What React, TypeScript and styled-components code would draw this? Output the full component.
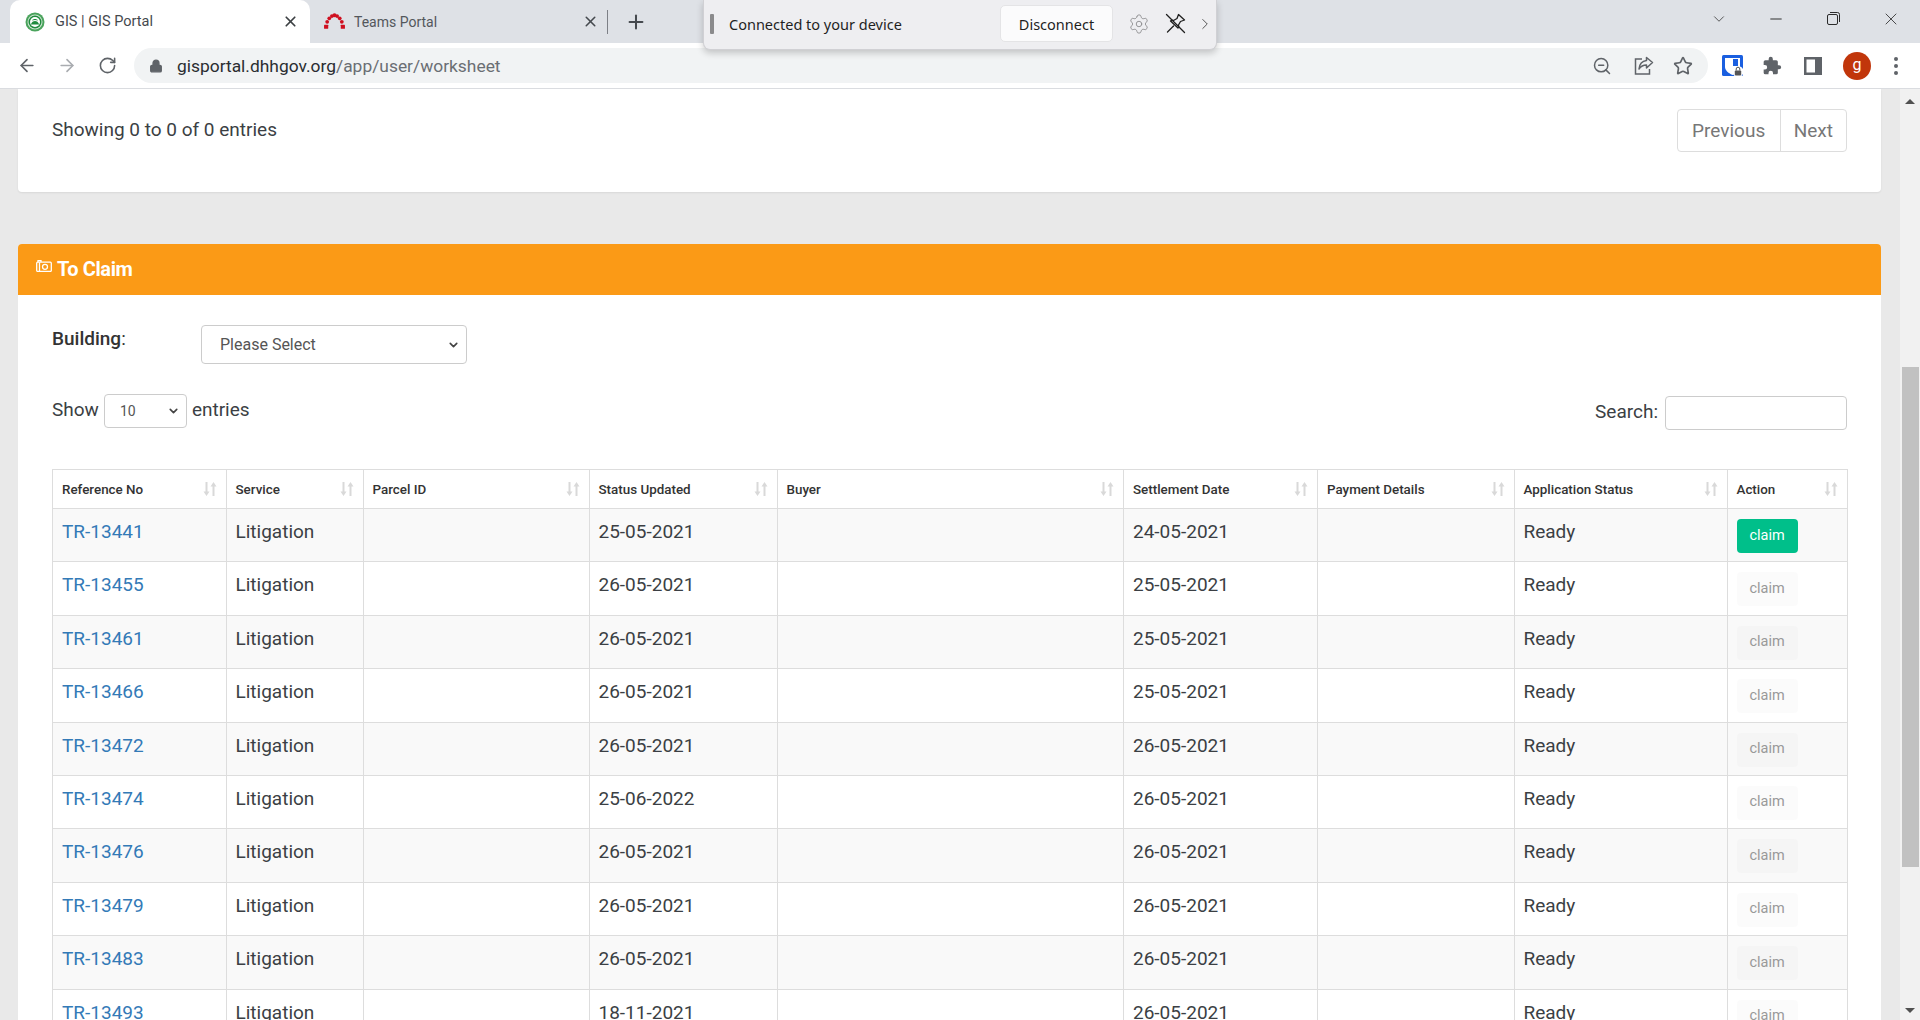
import React from "react";
import styled, { createGlobalStyle } from "styled-components";
import { ArrowLeft, ArrowRight, RotateCw, Lock, ZoomOut, Star, X, Plus, Minus, ChevronDown, ChevronRight, Settings } from "lucide-react";

const Global = createGlobalStyle`
  html, body { margin: 0; padding: 0; height: 100%; overflow: hidden; background: #e9e9e9; }
  * { box-sizing: border-box; }
  body { font-family: Roboto, "Liberation Sans", sans-serif; color: #333; }
`;

const Shell = styled.div`
  position: relative;
  width: 1920px;
  height: 1020px;
  display: flex;
  flex-direction: column;
  overflow: hidden;
`;

/* ---------- browser chrome ---------- */
const TabStrip = styled.div`
  height: 43px;
  flex: none;
  background: #dee1e6;
  display: flex;
  align-items: stretch;
  padding-left: 10px;
`;
const Tab = styled.div<{ $active?: boolean }>`
  width: 300px;
  display: flex;
  align-items: center;
  padding: 0 11px 0 ${(p) => (p.$active ? 15 : 13)}px;
  background: ${(p) => (p.$active ? "#fff" : "transparent")};
  border-radius: 10px 10px 0 0;
  color: ${(p) => (p.$active ? "#45494e" : "#53575c")};
  font-size: ${(p) => (p.$active ? 14.5 : 14)}px;
`;
const TabTitle = styled.span<{ $gap: number }>`
  flex: 1;
  margin-left: ${(p) => p.$gap}px;
  white-space: nowrap;
`;
const TabDivider = styled.div`
  width: 1px;
  height: 24px;
  margin: 10px 0 0 -3px;
  background: #7d8086;
`;
const NewTab = styled.div`
  width: 24px;
  margin-left: 17px;
  display: flex;
  align-items: center;
  color: #45494e;
`;
const WindowControls = styled.div`
  margin-left: auto;
  display: flex;
  align-items: center;
  color: #2b2b2b;
  margin-top: -6px;
`;
const WindowButton = styled.div`
  width: 57.5px;
  display: flex;
  justify-content: center;
`;
const Toolbar = styled.div`
  height: 46px;
  flex: none;
  background: #fff;
  border-bottom: 1px solid #dadce0;
  display: flex;
  align-items: flex-start;
  padding: 5px 0 0 17px;
`;
const NavButton = styled.div<{ $dim?: boolean }>`
  width: 20px;
  height: 35px;
  margin-right: 20px;
  display: flex;
  align-items: center;
  justify-content: center;
  color: ${(p) => (p.$dim ? "#a9acb0" : "#5f6368")};
`;
const Omnibox = styled.div`
  width: 1574px;
  height: 35px;
  margin-left: -3px;
  border-radius: 18px;
  background: #f1f3f4;
  display: flex;
  align-items: center;
  padding: 0 15px;
  color: #5f6368;
`;
const Url = styled.div`
  margin-left: 14px;
  font-size: 17.4px;
  color: #6a6e73;
  white-space: nowrap;
`;
const Host = styled.span`
  color: #2a2d31;
`;
const OmniIcons = styled.div`
  margin-left: auto;
  display: flex;
  align-items: center;
  gap: 19px;
`;
const ZoomIcon = styled(ZoomOut)`
  margin-right: 3px;
`;
const ExtensionIcons = styled.div`
  display: flex;
  align-items: center;
  height: 35px;
  margin-left: 14px;
  gap: 18px;
  color: #5f6368;
`;
const PanelWrap = styled.div`
  display: flex;
  margin: 0 4px;
`;
const Avatar = styled.div`
  width: 28px;
  height: 28px;
  border-radius: 50%;
  background: #c1360b;
  color: #fff;
  font-size: 16px;
  display: flex;
  align-items: center;
  justify-content: center;
  margin: 0 0 0 -1px;
  padding-bottom: 3px;
`;
const Kebab = styled.div`
  display: flex;
  flex-direction: column;
  gap: 3px;
  margin-left: 5px;
`;
const KebabDot = styled.span`
  width: 4px;
  height: 4px;
  border-radius: 50%;
  background: #5f6368;
`;

/* ---------- connection bar overlay ---------- */
const ConnectBar = styled.div`
  position: absolute;
  left: 703px;
  top: 0;
  width: 514px;
  height: 50px;
  background: #eeeef1;
  border: 1px solid #d0d0d4;
  border-top: none;
  border-radius: 0 0 7px 7px;
  box-shadow: 0 3px 7px rgba(0, 0, 0, 0.2);
  display: flex;
  align-items: center;
  padding: 0 0 2px 6px;
  font-family: "Noto Sans", "Open Sans", sans-serif;
  font-size: 14.5px;
  color: #1f1f1f;
`;
const Grip = styled.div`
  width: 4px;
  height: 20px;
  background: #8a8a8c;
  border-radius: 1px;
`;
const ConnectText = styled.span`
  margin-left: 15px;
  width: 271px;
  white-space: nowrap;
`;
const DisconnectButton = styled.div`
  width: 113px;
  height: 37px;
  background: #fbfbfc;
  border: 1px solid #e4e4e6;
  border-radius: 5px;
  display: flex;
  align-items: center;
  justify-content: center;
`;
const ConnectIcons = styled.div`
  display: flex;
  align-items: center;
  margin-left: 15px;
  gap: 15px;
  color: #8e8e90;
`;
const MoreIcon = styled.span`
  display: flex;
  color: #444;
  margin-left: -5px;
`;

/* ---------- page ---------- */
const Viewport = styled.div`
  flex: 1;
  min-height: 0;
  display: flex;
  background: #e9e9e9;
`;
const Content = styled.div`
  width: 1900px;
  padding: 0 19px 0 18px;
  overflow: hidden;
`;
const Scrollbar = styled.div`
  width: 20px;
  display: flex;
  flex-direction: column;
  align-items: center;
  background: #f1f1f1;
`;
const ScrollArrow = styled.div<{ $down?: boolean }>`
  width: 0;
  height: 0;
  margin-top: ${(p) => (p.$down ? 141 : 10)}px;
  border-left: 5px solid transparent;
  border-right: 5px solid transparent;
  ${(p) => (p.$down ? "border-top: 5px solid #505050;" : "border-bottom: 5px solid #505050;")}
`;
const ScrollThumb = styled.div`
  width: 17px;
  height: 500px;
  margin-top: 263px;
  background: #c1c1c1;
`;
const TopCard = styled.div`
  height: 103px;
  background: #fff;
  border-radius: 0 0 4px 4px;
  box-shadow: 0 1px 2px rgba(0, 0, 0, 0.08);
  display: flex;
  justify-content: space-between;
  padding: 20px 34px 0;
`;
const InfoText = styled.div`
  font-size: 19px;
  line-height: 41px;
  color: #3b3f44;
`;
const Pager = styled.div`
  display: flex;
  height: 43px;
  border: 1px solid #ddd;
  border-radius: 4px;
  color: #777;
  font-size: 19px;
`;
const PageButton = styled.div<{ $last?: boolean }>`
  padding: 0 ${(p) => (p.$last ? 13 : 14.5)}px;
  display: flex;
  align-items: center;
  ${(p) => (p.$last ? "border-left: 1px solid #ddd;" : "")}
`;
const ClaimCard = styled.div`
  margin-top: 52px;
  background: #fff;
  border-radius: 4px 4px 0 0;
`;
const CardHeader = styled.div`
  height: 51px;
  background: #fb9a16;
  border-radius: 4px 4px 0 0;
  display: flex;
  align-items: center;
  padding: 0 0 2px 18px;
  color: #fff;
`;
const CardTitle = styled.h3`
  margin: 0 0 0 5px;
  font-size: 20px;
  font-weight: 700;
  letter-spacing: -0.4px;
`;
const CameraMark = styled.svg`
  margin-top: -5px;
`;
const CardBody = styled.div`
  padding: 30px 34px 0;
`;
const BuildingRow = styled.div`
  display: flex;
  height: 39px;
`;
const FieldLabel = styled.label`
  width: 149px;
  font-size: 19px;
  line-height: 28px;
  color: #333;
`;
const Strong = styled.b`
  font-weight: 500;
`;
const SelectWrap = styled.div`
  position: relative;
  display: flex;
`;
const SelectChevron = styled.span<{ $right: number }>`
  position: absolute;
  right: ${(p) => p.$right}px;
  top: 50%;
  transform: translateY(-50%);
  display: flex;
  color: #444;
  pointer-events: none;
`;
const BuildingSelect = styled.select`
  appearance: none;
  width: 266px;
  height: 39px;
  padding: 0 0 0 18px;
  border: 1px solid #ccc;
  border-radius: 4px;
  background: #fff;
  color: #555;
  font: 400 16px Roboto, sans-serif;
`;
const FilterRow = styled.div`
  display: flex;
  justify-content: space-between;
  margin-top: 30px;
  height: 75px;
`;
const Lengths = styled.div`
  display: flex;
  height: 34px;
  align-items: center;
  font-size: 19px;
  color: #3b3f44;
  gap: 5px;
`;
const LengthText = styled.span`
  padding-bottom: 4px;
`;
const LengthSelect = styled.select`
  appearance: none;
  width: 83px;
  height: 34px;
  padding: 0 0 0 15px;
  border: 1px solid #ccc;
  border-radius: 4px;
  background: #fff;
  color: #555;
  font: 400 14px Roboto, sans-serif;
`;
const SearchBox = styled.div`
  display: flex;
  align-items: flex-start;
  margin-top: 2px;
  font-size: 19px;
  color: #3b3f44;
  gap: 7px;
`;
const SearchLabel = styled.span`
  line-height: 32px;
`;
const SearchInput = styled.input`
  width: 182px;
  height: 34px;
  border: 1px solid #ccc;
  border-radius: 4px;
  background: #fff;
`;
const Table = styled.table`
  width: 1795px;
  table-layout: fixed;
  border-collapse: collapse;
`;
const HeadCell = styled.th<{ $w: number }>`
  width: ${(p) => p.$w}px;
  height: 39px;
  padding: 0 9px;
  border: 1px solid #ddd;
  text-align: left;
  font-size: 13.4px;
  font-weight: 500;
  color: #333;
`;
const HeadInner = styled.div`
  display: flex;
  align-items: center;
  justify-content: space-between;
  white-space: nowrap;
`;
const Row = styled.tr<{ $odd: boolean }>`
  height: 53.4px;
  background: ${(p) => (p.$odd ? "#f9f9f9" : "#fff")};
`;
const Cell = styled.td`
  padding: 9px 9px 0;
  vertical-align: top;
  border: 1px solid #ddd;
  font-size: 19px;
  line-height: 27px;
  color: #3b3f44;
  height: 53.4px;
`;
const RefLink = styled.a`
  color: #337ab7;
  text-decoration: none;
`;
const ClaimButton = styled.div<{ $enabled: boolean }>`
  width: 61px;
  height: 34px;
  margin-top: 1px;
  padding-bottom: 2px;
  display: flex;
  align-items: center;
  justify-content: center;
  border-radius: 4px;
  font-size: 14.5px;
  background: ${(p) => (p.$enabled ? "#00bf8a" : "rgba(0,0,0,0.015)")};
  color: ${(p) => (p.$enabled ? "#fff" : "#999")};
`;

/* ---------- drawn icons ---------- */
const GisIcon = () => (
  <svg width="20" height="20" viewBox="0 0 20 20">
    <circle cx="10" cy="10" r="9.500" fill="#4aa35c" />
    <circle cx="10" cy="10" r="7.500" fill="#cfe6d3" />
    <circle cx="10" cy="10" r="6.500" fill="#1f8a3d" />
    <circle cx="10" cy="10" r="5" fill="#fff" />
    <path d="M5.800 12.500c.8-2.500 2.500-3.500 4.200-3.500s3.400 1 4.200 3.500z" fill="#1f8a3d" />
    <path d="M7 8.500c1-2 5-2 6 0-2-.8-4-.8-6 0z" fill="#1f8a3d" />
  </svg>
);
const TeamsIcon = () => (
  <svg width="23" height="17" viewBox="0 0 22 16" fill="#cf1020">
    <rect x="1" y="11" width="4" height="4" rx=".5" />
    <rect x="17" y="11" width="4" height="4" rx=".5" />
    <circle cx="4" cy="8.300" r="1.800" />
    <circle cx="18" cy="8.300" r="1.800" />
    <circle cx="6" cy="5" r="1.800" />
    <circle cx="16" cy="5" r="1.800" />
    <circle cx="8.500" cy="2.800" r="1.800" />
    <circle cx="13.500" cy="2.800" r="1.800" />
    <circle cx="11" cy="2" r="2" />
  </svg>
);
const SortIcon = () => (
  <svg width="14" height="14" viewBox="0 0 14 14" fill="#d9d9d9">
    <path d="M2.500 0h2v9.500h2L3.500 14 .5 9.500h2z" />
    <path d="M9.500 14h2V4.500h2L10.500 0l-3 4.500h2z" />
  </svg>
);
const ShareIcon = () => (
  <svg width="20" height="20" viewBox="0 0 20 20" fill="none" stroke="#5f6368" strokeWidth="1.500">
    <path d="M8 3H1.500v15h14v-5" />
    <path d="M18.500 6.500 12.500 1.500v3C8 5 5.500 8 5 13c2-3 4-4 7.500-4v3z" strokeLinejoin="round" />
  </svg>
);
const ShieldExt = () => (
  <svg width="22" height="22" viewBox="0 0 22 22">
    <rect width="21" height="21" rx="1.500" fill="#1a5fe0" />
    <path d="M3 3h15v9c0 3-3 6-7.500 8C6 18 3 15 3 12z" fill="#fff" />
    <path d="M11 4h5v7h-5z" fill="#1a5fe0" />
    <circle cx="16" cy="16.500" r="5.500" fill="#fff" />
    <rect x="12.800" y="15.500" width="6.400" height="5" rx="1" fill="#555" />
    <path d="M14.200 15.500v-1.500a1.800 1.800 0 0 1 3.600 0v1.500" fill="none" stroke="#555" strokeWidth="1" />
  </svg>
);
const PuzzleIcon = () => (
  <svg width="20" height="20" viewBox="0 0 24 24" fill="#5f6368">
    <path d="M20.500 11H19V7a2 2 0 0 0-2-2h-4V3.500a2.500 2.500 0 0 0-5 0V5H4a2 2 0 0 0-2 2v3.800h1.500a2.700 2.700 0 0 1 0 5.400H2V20a2 2 0 0 0 2 2h3.800v-1.500a2.700 2.700 0 0 1 5.400 0V22H17a2 2 0 0 0 2-2v-4h1.500a2.500 2.500 0 0 0 0-5z" />
  </svg>
);
const SidePanelIcon = () => (
  <svg width="18" height="18" viewBox="0 0 18 18">
    <rect width="18" height="18" fill="#5f6368" />
    <rect x="2.500" y="2.500" width="8.500" height="13" fill="#fff" />
  </svg>
);
const RestoreIcon = () => (
  <svg width="13" height="13" viewBox="0 0 13 13" fill="none" stroke="#2b2b2b" strokeWidth="1">
    <rect x=".5" y="2.500" width="10" height="10" rx="1.500" />
    <path d="M3 .5h7.500a2 2 0 0 1 2 2V10" />
  </svg>
);
const CrossedPin = () => (
  <svg width="21" height="21" viewBox="0 0 21 21" fill="none" stroke="#1f1f1f" strokeWidth="1.300" strokeLinejoin="round" strokeLinecap="round">
    <path d="M1.500 1.500l18 18" />
    <path d="M13.500 1.500l6 5.500-4 1.500-2 3.500c.5 1.500 0 2.500-.5 3L5.500 8c1-.8 2-1 3-.5l3.500-2z" />
    <path d="M8.500 13l-6 6" />
  </svg>
);
const Camera = () => (
  <CameraMark width="16" height="12" viewBox="0 0 16 12" fill="none" stroke="#fff" strokeWidth="1.300">
    <rect x=".7" y="2.200" width="14.600" height="9.200" rx="1" />
    <circle cx="9" cy="6.800" r="2.500" />
    <path d="M2 2V.7h3V2M3.500 2.500v8.500" />
  </CameraMark>
);

/* ---------- data ---------- */
const columns: [string, number][] = [
  ["Reference No", 173.5],
  ["Service", 137],
  ["Parcel ID", 226],
  ["Status Updated", 188],
  ["Buyer", 346.5],
  ["Settlement Date", 194],
  ["Payment Details", 196.5],
  ["Application Status", 213],
  ["Action", 120.5],
];
const rows: [string, string, string][] = [
  ["TR-13441", "25-05-2021", "24-05-2021"],
  ["TR-13455", "26-05-2021", "25-05-2021"],
  ["TR-13461", "26-05-2021", "25-05-2021"],
  ["TR-13466", "26-05-2021", "25-05-2021"],
  ["TR-13472", "26-05-2021", "26-05-2021"],
  ["TR-13474", "25-06-2022", "26-05-2021"],
  ["TR-13476", "26-05-2021", "26-05-2021"],
  ["TR-13479", "26-05-2021", "26-05-2021"],
  ["TR-13483", "26-05-2021", "26-05-2021"],
  ["TR-13493", "18-11-2021", "26-05-2021"],
];

export default function App() {
  return (
    <Shell>
      <Global />
      <TabStrip>
        <Tab $active>
          <GisIcon />
          <TabTitle $gap={10}>GIS | GIS Portal</TabTitle>
          <X size={17} strokeWidth={2.4} color="#3c4043" />
        </Tab>
        <Tab>
          <TeamsIcon />
          <TabTitle $gap={8}>Teams Portal</TabTitle>
          <X size={17} strokeWidth={2.2} color="#45494e" />
        </Tab>
        <TabDivider />
        <NewTab>
          <Plus size={22} strokeWidth={2.2} />
        </NewTab>
        <WindowControls>
          <WindowButton><ChevronDown size={18} strokeWidth={1} /></WindowButton>
          <WindowButton><Minus size={18} strokeWidth={1.300} /></WindowButton>
          <WindowButton><RestoreIcon /></WindowButton>
          <WindowButton><X size={20} strokeWidth={1} /></WindowButton>
        </WindowControls>
      </TabStrip>
      <Toolbar>
        <NavButton><ArrowLeft size={21} strokeWidth={2} /></NavButton>
        <NavButton $dim><ArrowRight size={21} strokeWidth={2} /></NavButton>
        <NavButton><RotateCw size={19} strokeWidth={2} /></NavButton>
        <Omnibox>
          <Lock size={14} strokeWidth={2.4} fill="#5f6368" />
          <Url><Host>gisportal.dhhgov.org</Host>/app/user/worksheet</Url>
          <OmniIcons>
            <ZoomIcon size={20} strokeWidth={1.800} />
            <ShareIcon />
            <Star size={20} strokeWidth={2} />
          </OmniIcons>
        </Omnibox>
        <ExtensionIcons>
          <ShieldExt />
          <PuzzleIcon />
          <PanelWrap><SidePanelIcon /></PanelWrap>
          <Avatar>g</Avatar>
          <Kebab><KebabDot /><KebabDot /><KebabDot /></Kebab>
        </ExtensionIcons>
      </Toolbar>
      <ConnectBar>
        <Grip />
        <ConnectText>Connected to your device</ConnectText>
        <DisconnectButton>Disconnect</DisconnectButton>
        <ConnectIcons>
          <Settings size={22} strokeWidth={1} />
          <CrossedPin />
          <MoreIcon><ChevronRight size={18} strokeWidth={1.200} /></MoreIcon>
        </ConnectIcons>
      </ConnectBar>
      <Viewport>
        <Content>
          <TopCard>
            <InfoText>Showing 0 to 0 of 0 entries</InfoText>
            <Pager>
              <PageButton>Previous</PageButton>
              <PageButton $last>Next</PageButton>
            </Pager>
          </TopCard>
          <ClaimCard>
            <CardHeader>
              <Camera />
              <CardTitle>To Claim</CardTitle>
            </CardHeader>
            <CardBody>
              <BuildingRow>
                <FieldLabel><Strong>Building</Strong>:</FieldLabel>
                <SelectWrap>
                  <BuildingSelect defaultValue="">
                    <option value="">Please Select</option>
                  </BuildingSelect>
                  <SelectChevron $right={7}><ChevronDown size={13} strokeWidth={3} /></SelectChevron>
                </SelectWrap>
              </BuildingRow>
              <FilterRow>
                <Lengths>
                  <LengthText>Show</LengthText>
                  <SelectWrap>
                    <LengthSelect defaultValue="10">
                      <option value="10">10</option>
                      <option value="25">25</option>
                    </LengthSelect>
                    <SelectChevron $right={7}><ChevronDown size={13} strokeWidth={3} /></SelectChevron>
                  </SelectWrap>
                  <LengthText>entries</LengthText>
                </Lengths>
                <SearchBox>
                  <SearchLabel>Search:</SearchLabel>
                  <SearchInput />
                </SearchBox>
              </FilterRow>
              <Table>
                <thead>
                  <tr>
                    {columns.map(([name, w]) => (
                      <HeadCell key={name} $w={w}>
                        <HeadInner>
                          {name}
                          <SortIcon />
                        </HeadInner>
                      </HeadCell>
                    ))}
                  </tr>
                </thead>
                <tbody>
                  {rows.map(([ref, updated, settled], i) => (
                    <Row key={ref} $odd={i % 2 === 0}>
                      <Cell><RefLink href="#">{ref}</RefLink></Cell>
                      <Cell>Litigation</Cell>
                      <Cell />
                      <Cell>{updated}</Cell>
                      <Cell />
                      <Cell>{settled}</Cell>
                      <Cell />
                      <Cell>Ready</Cell>
                      <Cell><ClaimButton $enabled={i === 0}>claim</ClaimButton></Cell>
                    </Row>
                  ))}
                </tbody>
              </Table>
            </CardBody>
          </ClaimCard>
        </Content>
        <Scrollbar>
          <ScrollArrow />
          <ScrollThumb />
          <ScrollArrow $down />
        </Scrollbar>
      </Viewport>
    </Shell>
  );
}
